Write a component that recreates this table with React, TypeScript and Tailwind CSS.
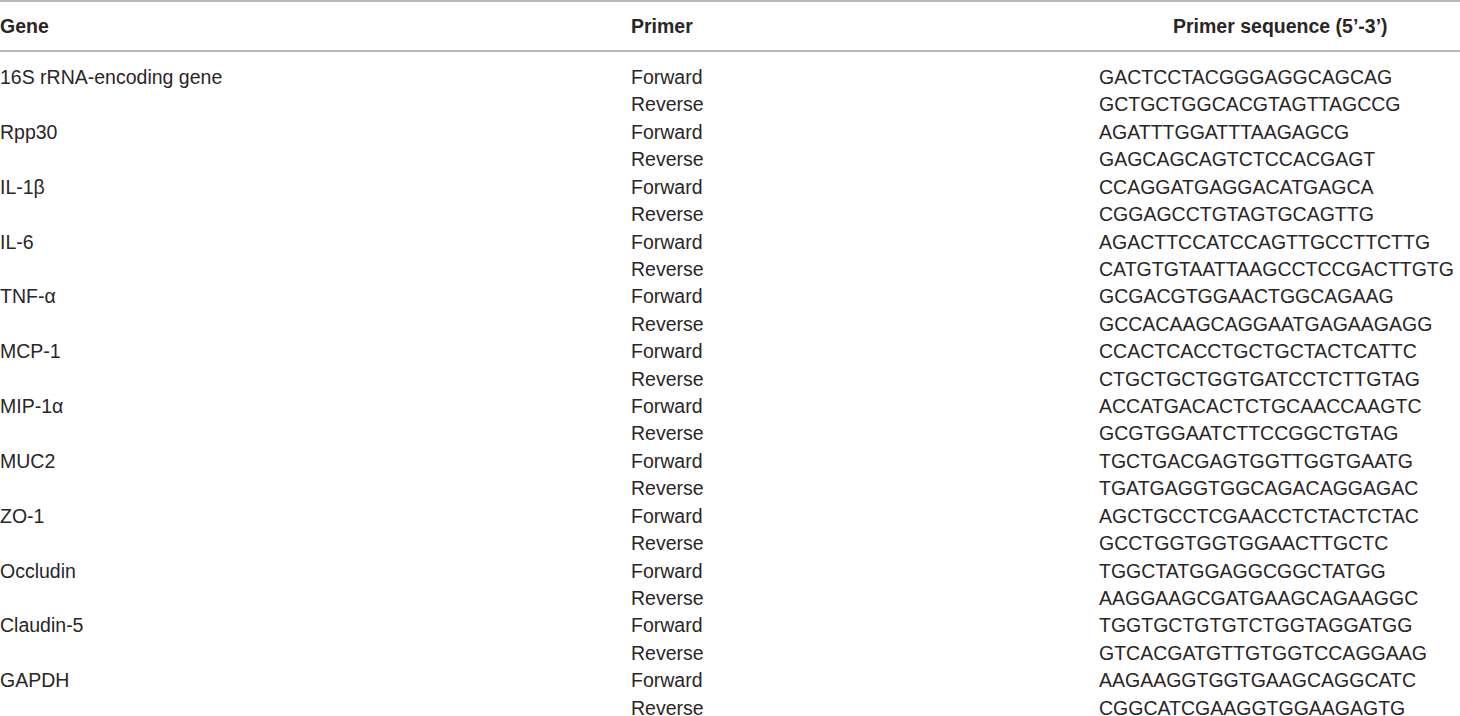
const rows: [string, string, string][] = [
  ['16S rRNA-encoding gene', 'Forward', 'GACTCCTACGGGAGGCAGCAG'],
  ['', 'Reverse', 'GCTGCTGGCACGTAGTTAGCCG'],
  ['Rpp30', 'Forward', 'AGATTTGGATTTAAGAGCG'],
  ['', 'Reverse', 'GAGCAGCAGTCTCCACGAGT'],
  ['IL-1β', 'Forward', 'CCAGGATGAGGACATGAGCA'],
  ['', 'Reverse', 'CGGAGCCTGTAGTGCAGTTG'],
  ['IL-6', 'Forward', 'AGACTTCCATCCAGTTGCCTTCTTG'],
  ['', 'Reverse', 'CATGTGTAATTAAGCCTCCGACTTGTG'],
  ['TNF-α', 'Forward', 'GCGACGTGGAACTGGCAGAAG'],
  ['', 'Reverse', 'GCCACAAGCAGGAATGAGAAGAGG'],
  ['MCP-1', 'Forward', 'CCACTCACCTGCTGCTACTCATTC'],
  ['', 'Reverse', 'CTGCTGCTGGTGATCCTCTTGTAG'],
  ['MIP-1α', 'Forward', 'ACCATGACACTCTGCAACCAAGTC'],
  ['', 'Reverse', 'GCGTGGAATCTTCCGGCTGTAG'],
  ['MUC2', 'Forward', 'TGCTGACGAGTGGTTGGTGAATG'],
  ['', 'Reverse', 'TGATGAGGTGGCAGACAGGAGAC'],
  ['ZO-1', 'Forward', 'AGCTGCCTCGAACCTCTACTCTAC'],
  ['', 'Reverse', 'GCCTGGTGGTGGAACTTGCTC'],
  ['Occludin', 'Forward', 'TGGCTATGGAGGCGGCTATGG'],
  ['', 'Reverse', 'AAGGAAGCGATGAAGCAGAAGGC'],
  ['Claudin-5', 'Forward', 'TGGTGCTGTGTCTGGTAGGATGG'],
  ['', 'Reverse', 'GTCACGATGTTGTGGTCCAGGAAG'],
  ['GAPDH', 'Forward', 'AAGAAGGTGGTGAAGCAGGCATC'],
  ['', 'Reverse', 'CGGCATCGAAGGTGGAAGAGTG'],
];

export default function App() {
  return (
    <div className="w-[1460px] h-[716px] overflow-hidden bg-white text-[#2a2627] font-['Liberation_Sans',Arial,sans-serif]">
      {/* Header */}
      <div className="grid grid-cols-[631px_468px_1fr] h-[52px] items-center border-t-2 border-b-2 border-[#b8b8b8] text-[19.5px] font-bold pt-[1px]">
        <div>Gene</div>
        <div>Primer</div>
        <div className="pl-[74px]">Primer sequence (5’-3’)</div>
      </div>

      {/* Body */}
      <div className="pt-[11px] text-[19.5px]">
        {rows.map(([gene, primer, seq], i) => (
          <div key={i} className="grid grid-cols-[631px_468px_1fr] h-[27.43px] items-center whitespace-nowrap">
            <div>{gene}</div>
            <div>{primer}</div>
            <div>{seq}</div>
          </div>
        ))}
      </div>
    </div>
  );
}
